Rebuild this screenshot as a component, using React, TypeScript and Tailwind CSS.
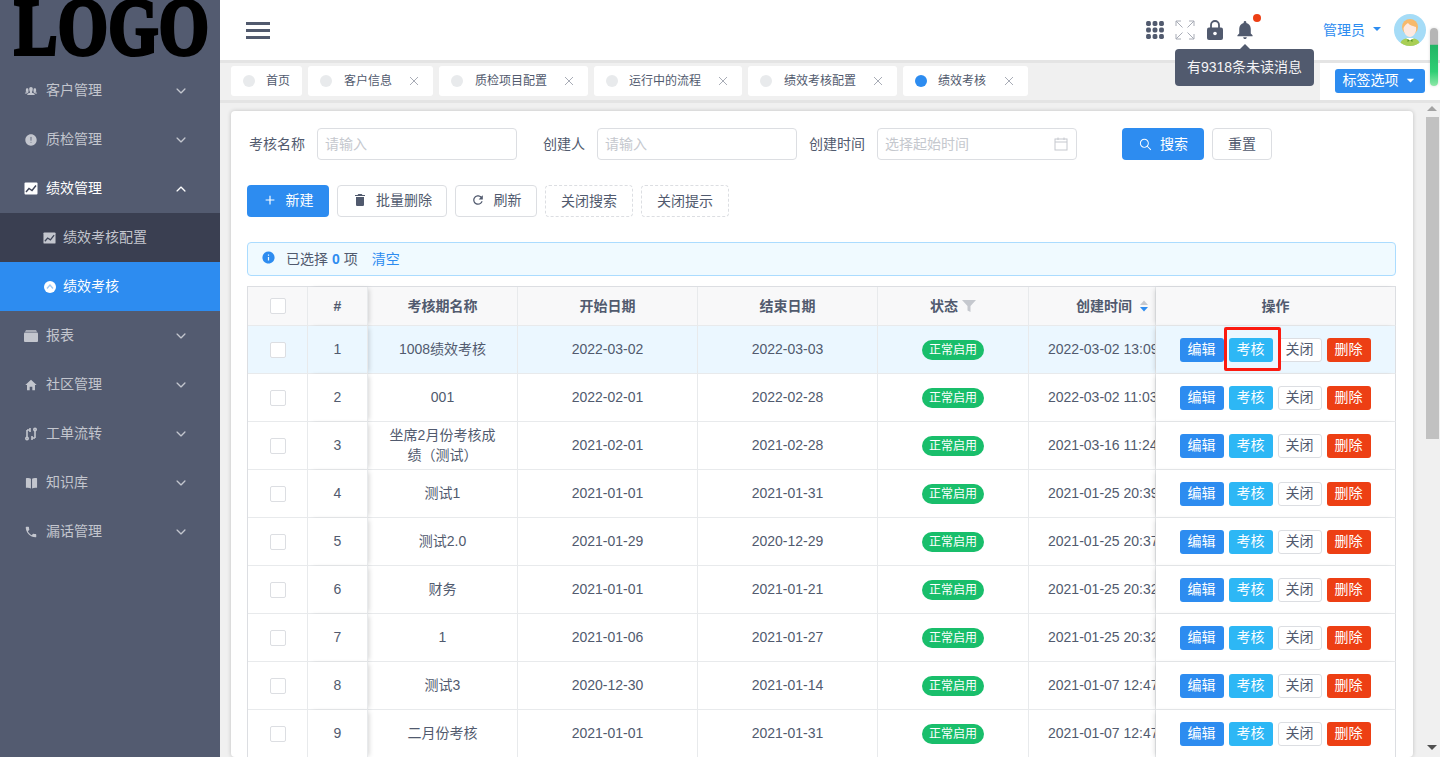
import React from "react";
import {
  IoIosPeople, IoIosAlert, IoMdHome, IoMdCall,
  IoIosArrowDown, IoIosArrowUp, IoIosSearch, IoMdAdd, IoMdTrash, IoMdRefresh,
  IoMdInformationCircle, IoMdNotifications, IoMdArrowDropdown,
} from "react-icons/io";

const Chart = ({ className = "" }: { className?: string }) => (
  <svg viewBox="0 0 14 12" className={className}>
    <rect x="0.5" y="0" width="13" height="12" rx="1" fill="currentColor" />
    <path d="M2 9.5 L5 6 L8 8 L12 3" stroke="#3f4558" strokeWidth="1.4" fill="none" />
  </svg>
);

const Filing = () => (
  <svg viewBox="0 0 14 12" className="h-[12px] w-[14px]" fill="currentColor">
    <path d="M2 0 H12 L13 2 H1 Z" opacity=".75" />
    <rect x="0" y="2.5" width="14" height="9.5" rx="1" />
  </svg>
);

const Flow = () => (
  <svg viewBox="0 0 14 14" className="h-[14px] w-[14px]" fill="none" stroke="currentColor" strokeWidth="1.6">
    <path d="M3 3 H6 V1 M6 5 V3 M3 3 V10 M11 11 H8 V13 M8 9 V11 M11 11 V4" />
    <circle cx="3" cy="11.5" r="1.2" />
    <circle cx="11" cy="2.5" r="1.2" />
  </svg>
);

const Book = () => (
  <svg viewBox="0 0 14 12" className="h-[12px] w-[13px]" fill="currentColor">
    <path d="M1 1 C3 0.4 5 0.6 6.4 1.4 V12 C5 11 3 10.8 1 11.2 Z" />
    <path d="M13 1 C11 0.4 9 0.6 7.6 1.4 V12 C9 11 11 10.8 13 11.2 Z" />
  </svg>
);

const menu = [
  { t: "客户管理", i: <IoIosPeople size={16} /> },
  { t: "质检管理", i: <IoIosAlert size={16} /> },
];
const menu2 = [
  { t: "报表", i: <Filing /> },
  { t: "社区管理", i: <IoMdHome size={14} /> },
  { t: "工单流转", i: <Flow /> },
  { t: "知识库", i: <Book /> },
  { t: "漏话管理", i: <IoMdCall size={14} /> },
];

const MenuItem = ({ t, i, open }: { t: string; i: React.ReactNode; open?: boolean }) => (
  <div className={`flex h-[49px] items-center pl-[24px] pr-[32px] ${open ? "text-white" : "text-[#c3c6ce]"}`}>
    <span className="flex w-[14px] justify-center">{i}</span>
    <span className="ml-[8px] flex-1">{t}</span>
    {open ? <IoIosArrowUp size={14} /> : <IoIosArrowDown size={14} />}
  </div>
);

const tabs = [
  { t: "首页", w: "w-[71px]", m: "ml-[11px]" },
  { t: "客户信息", w: "w-[125px]", m: "ml-[12px]", c: true },
  { t: "质检项目配置", w: "w-[149px]", m: "ml-[12px]", c: true },
  { t: "运行中的流程", w: "w-[148px]", m: "ml-[11px]", c: true },
  { t: "绩效考核配置", w: "w-[149px]", m: "ml-[12px]", c: true },
  { t: "绩效考核", w: "w-[125px]", m: "ml-[11px]", c: true, a: true },
];

const rows = [
  ["1008绩效考核", "2022-03-02", "2022-03-03", "2022-03-02 13:09"],
  ["001", "2022-02-01", "2022-02-28", "2022-03-02 11:03"],
  ["坐席2月份考核成绩（测试）", "2021-02-01", "2021-02-28", "2021-03-16 11:24"],
  ["测试1", "2021-01-01", "2021-01-31", "2021-01-25 20:39"],
  ["测试2.0", "2021-01-29", "2020-12-29", "2021-01-25 20:37"],
  ["财务", "2021-01-01", "2021-01-21", "2021-01-25 20:32"],
  ["1", "2021-01-06", "2021-01-27", "2021-01-25 20:32"],
  ["测试3", "2020-12-30", "2021-01-14", "2021-01-07 12:47"],
  ["二月份考核", "2021-01-01", "2021-01-31", "2021-01-07 12:47"],
];

const Check = () => <span className="mx-auto block h-[16px] w-[16px] rounded-[2px] border border-[#dcdee2] bg-white" />;

const Input = ({ p, children }: { p: string; children?: React.ReactNode }) => (
  <div className="flex h-[32px] w-[200px] items-center justify-between rounded-[4px] border border-[#dcdee2] bg-white pl-[7px] pr-[8px] text-[#c5c8ce]">
    <span>{p}</span>
    {children}
  </div>
);

const OpBtn = ({ c, t }: { c: string; t: string }) => (
  <span className={`flex h-[24px] w-[44px] items-center justify-center rounded-[3px] ${c}`}>{t}</span>
);

const th = "border-r border-b border-[#e8eaec] bg-[#f8f8f9] text-center font-bold";
const td = "border-r border-b border-[#e8eaec] text-center";

export default function App() {
  return (
    <div className="relative flex h-[757px] w-[1440px] overflow-hidden bg-white font-['Liberation_Sans','Noto_Sans_CJK_SC',sans-serif] text-[14px] text-[#515a6e]">
      {/* sidebar */}
      <aside className="flex h-full w-[220px] shrink-0 flex-col bg-[#535b70]">
        <div className="flex h-[66px] items-start overflow-hidden">
          <span className="ml-[-10px] mt-[-18px] origin-center scale-x-[.8] font-['Liberation_Serif',serif] text-[80px] font-bold leading-[90px] tracking-[1px] text-black [-webkit-text-stroke:4px_#000]">
            LOGO
          </span>
        </div>
        {menu.map((m) => <MenuItem key={m.t} {...m} />)}
        <MenuItem t="绩效管理" i={<Chart className="h-[13px] w-[14px]" />} open />
        <div className="flex h-[49px] items-center bg-[#3a3f51] pl-[43px] text-[#c3c6ce]">
          <Chart className="h-[12px] w-[13px]" />
          <span className="ml-[7px]">绩效考核配置</span>
        </div>
        <div className="flex h-[49px] items-center bg-[#2d8cf0] pl-[44px] text-white">
          <svg viewBox="0 0 12 12" className="h-[12px] w-[12px]">
            <circle cx="6" cy="6" r="6" fill="#fff" />
            <path d="M3 7.5 L6 4 L9 7.5" stroke="#9cc7f5" strokeWidth="1.3" fill="none" />
          </svg>
          <span className="ml-[7px]">绩效考核</span>
        </div>
        {menu2.map((m) => <MenuItem key={m.t} {...m} />)}
      </aside>

      {/* main */}
      <div className="flex h-full min-w-0 flex-1 flex-col">
        <header className="flex h-[60px] shrink-0 items-center bg-white pl-[26px] pr-[14px]">
          <div className="flex w-[24px] flex-col gap-[4px]">
            <span className="h-[3px] bg-[#515a6e]" />
            <span className="h-[3px] bg-[#515a6e]" />
            <span className="h-[3px] bg-[#515a6e]" />
          </div>
          <div className="ml-auto flex items-center">
            <svg viewBox="0 0 18 18" className="h-[18px] w-[18px]" fill="#515a6e">
              {[2.5, 9, 15.5].flatMap((y) => [2.5, 9, 15.5].map((x) => <rect key={`${x}-${y}`} x={x - 2.4} y={y - 2.4} width="4.8" height="4.8" rx="1.6" />))}
            </svg>
            <svg viewBox="0 0 20 20" className="ml-[11px] h-[20px] w-[20px]" stroke="#a8acb6" strokeWidth="1" fill="none">
              <path d="M1 1 L7.5 7.5 M1 1 H6 M1 1 V6 M19 1 L12.5 7.5 M19 1 H14 M19 1 V6 M1 19 L7.5 12.5 M1 19 H6 M1 19 V14 M19 19 L12.5 12.5 M19 19 H14 M19 19 V14" />
            </svg>
            <svg viewBox="0 0 16 20" className="ml-[12px] h-[20px] w-[16px]">
              <path d="M4 8 V5 a4 4 0 0 1 8 0 V8" stroke="#515a6e" strokeWidth="1.8" fill="none" />
              <rect x="0" y="7.5" width="16" height="12.5" rx="2" fill="#515a6e" />
              <circle cx="8" cy="13.5" r="1.8" fill="#fff" />
            </svg>
            <span className="relative ml-[11px] flex w-[22px] justify-center">
              <IoMdNotifications size={22} color="#515a6e" />
              <span className="absolute right-[-5px] top-[-5px] h-[8px] w-[8px] rounded-full bg-[#ed3f14]" />
            </span>
            <span className="ml-[67px] text-[#2d8cf0]">管理员</span>
            <IoMdArrowDropdown size={16} color="#2d8cf0" className="ml-[4px] mt-[-2px]" />
            <svg viewBox="0 0 32 32" className="ml-[9px] h-[32px] w-[32px]">
              <clipPath id="av"><circle cx="16" cy="16" r="16" /></clipPath>
              <g clipPath="url(#av)">
                <rect width="32" height="32" fill="#a5dcf7" />
                <path d="M6 32 C6 26 10 24 16 24 C22 24 26 26 26 32 Z" fill="#a9cf55" />
                <circle cx="16" cy="13" r="8" fill="#f7b96b" />
                <path d="M9.5 14 C11 11 12.5 10 14 9 C16 12 20 12 22 13 C23 19 19 23 16 23 C12.5 23 9.5 19 9.5 14 Z" fill="#fde9e1" />
                <path d="M12 24 H20 L16 27 Z" fill="#fff" />
                <path d="M13.5 25 L16 26.5 L18.5 25 V28 L16 26.5 L13.5 28 Z" fill="#5c9a22" />
              </g>
            </svg>
          </div>
        </header>

        <div className="flex h-[43px] shrink-0 border-y-[3px] border-[#e4e4e4] bg-[#f0f0f0]">
          <div className="flex flex-1 items-center gap-[6px] pb-[1px] pl-[11px]">
            {tabs.map((x) => (
              <div key={x.t} className={`flex h-[30px] items-center rounded-[3px] bg-white pl-[12px] text-[12px] ${x.w}`}>
                <span className={`h-[12px] w-[12px] rounded-full ${x.a ? "bg-[#2d8cf0]" : "bg-[#e8eaec]"}`} />
                <span className={`${x.m} flex-1`}>{x.t}</span>
                {x.c && (
                  <svg viewBox="0 0 10 10" className="mr-[14px] h-[10px] w-[10px]" stroke="#a8acb6" strokeWidth="1">
                    <path d="M1 1 L9 9 M9 1 L1 9" />
                  </svg>
                )}
              </div>
            ))}
          </div>
          <div className="flex w-[120px] items-center justify-center bg-white pb-[1px]">
            <span className="flex h-[24px] w-[90px] items-center justify-center gap-[4px] rounded-[3px] bg-[#2d8cf0] pb-[2px] text-white">
              标签选项 <IoMdArrowDropdown size={15} />
            </span>
          </div>
        </div>

        <div className="flex min-h-0 flex-1 bg-[#f0f0f0]">
          <div className="ml-[11px] mt-[8px] min-w-0 w-[1182px] rounded-[4px] bg-white px-[16px] pt-[17px] shadow-[0_0_4px_rgba(0,0,0,.2)]">
            <div className="flex h-[32px] items-center">
              <span className="ml-[2px]">考核名称</span>
              <span className="ml-[12px]"><Input p="请输入" /></span>
              <span className="ml-[26px]">创建人</span>
              <span className="ml-[12px]"><Input p="请输入" /></span>
              <span className="ml-[12px]">创建时间</span>
              <span className="ml-[12px]">
                <Input p="选择起始时间">
                  <svg viewBox="0 0 14 14" className="h-[14px] w-[14px]" stroke="#c5c8ce" fill="none">
                    <rect x="1" y="2" width="12" height="11" />
                    <path d="M1 5 H13 M4 0.5 V3 M10 0.5 V3" />
                  </svg>
                </Input>
              </span>
              <span className="ml-[45px] flex h-[32px] w-[82px] items-center justify-center gap-[7px] rounded-[4px] bg-[#2d8cf0] text-white">
                <IoIosSearch size={15} />搜索
              </span>
              <span className="ml-[8px] flex h-[32px] w-[60px] items-center justify-center rounded-[4px] border border-[#dcdee2]">重置</span>
            </div>

            <div className="mt-[25px] flex h-[32px] items-center gap-[8px]">
              <span className="flex h-full w-[82px] items-center justify-center gap-[9px] rounded-[4px] bg-[#2d8cf0] pb-[2px] text-white">
                <IoMdAdd size={14} />新建
              </span>
              <span className="flex h-full w-[110px] items-center justify-center gap-[8px] rounded-[4px] border border-[#dcdee2] pb-[2px]">
                <IoMdTrash size={16} />批量删除
              </span>
              <span className="flex h-full w-[82px] items-center justify-center gap-[9px] rounded-[4px] border border-[#dcdee2] pb-[2px]">
                <IoMdRefresh size={14} />刷新
              </span>
              <span className="flex h-full w-[88px] items-center justify-center rounded-[4px] border border-dashed border-[#dcdee2]">关闭搜索</span>
              <span className="flex h-full w-[88px] items-center justify-center rounded-[4px] border border-dashed border-[#dcdee2]">关闭提示</span>
            </div>

            <div className="mt-[25px] flex h-[34px] w-[1149px] items-center rounded-[4px] border border-[#abdcff] bg-[#f0faff] pl-[13px]">
              <IoMdInformationCircle size={15} color="#2d8cf0" className="mt-[-4px]" />
              <span className="ml-[10px]">已选择</span>
              <b className="ml-[4px] text-[#2d8cf0]">0</b>
              <span className="ml-[4px]">项</span>
              <span className="ml-[14px] text-[#2d8cf0]">清空</span>
            </div>

            <table className="mt-[10px] w-[1149px] table-fixed border-separate border-spacing-0 border-l border-t border-[#dcdee2] border-r-0">
              <colgroup>
                <col className="w-[60px]" />
                <col className="w-[60px]" />
                <col className="w-[150px]" />
                <col className="w-[180px]" />
                <col className="w-[180px]" />
                <col className="w-[151px]" />
                <col className="w-[127px]" />
                <col />
              </colgroup>
              <thead>
                <tr className="h-[39px]">
                  <th className={th}><Check /></th>
                  <th className={`${th} relative shadow-[3px_0_5px_-2px_rgba(0,0,0,.18)]`}>#</th>
                  <th className={th}>考核期名称</th>
                  <th className={th}>开始日期</th>
                  <th className={th}>结束日期</th>
                  <th className={th}>
                    <span className="inline-flex items-center gap-[4px]">
                      状态
                      <svg viewBox="0 0 14 12" className="h-[12px] w-[14px]" fill="#c5c8ce">
                        <path d="M0 0 H14 L8.5 6 V12 L5.5 10.5 V6 Z" />
                      </svg>
                    </span>
                  </th>
                  <th className={`${th} pl-[47px] text-left`}>
                    <span className="inline-flex items-center gap-[8px]">
                      创建时间
                      <svg viewBox="0 0 8 12" className="h-[12px] w-[8px]">
                        <path d="M4 0.5 L8 5 H0 Z" fill="#c5c8ce" />
                        <path d="M4 11.5 L8 7 H0 Z" fill="#2d8cf0" />
                      </svg>
                    </span>
                  </th>
                  <th className={`${th} relative border-r-[#dcdee2] shadow-[-3px_0_5px_-2px_rgba(0,0,0,.15)]`}>操作</th>
                </tr>
              </thead>
              <tbody>
                {rows.map((r, i) => {
                  const bg = i === 0 ? "bg-[#ebf7ff]" : "bg-white";
                  return (
                    <tr key={i} className="h-[48px]">
                      <td className={`${td} ${bg}`}><Check /></td>
                      <td className={`${td} ${bg} relative shadow-[3px_0_5px_-2px_rgba(0,0,0,.18)]`}>{i + 1}</td>
                      <td className={`${td} ${bg} px-[18px] pb-[2px] leading-[20px] [text-spacing-trim:space-all]`}>{r[0]}</td>
                      <td className={`${td} ${bg}`}>{r[1]}</td>
                      <td className={`${td} ${bg}`}>{r[2]}</td>
                      <td className={`${td} ${bg}`}>
                        <span className="inline-flex h-[20px] w-[62px] items-center justify-center rounded-[10px] bg-[#19be6b] text-[12px] text-white">正常启用</span>
                      </td>
                      <td className={`${td} ${bg} overflow-hidden whitespace-nowrap pl-[19px] text-left`}>{r[3]}</td>
                      <td className={`${td} ${bg} relative border-r-[#dcdee2] shadow-[-3px_0_5px_-2px_rgba(0,0,0,.15)]`}>
                        <div className="flex items-center justify-center gap-[5px] pr-[1px]">
                          <OpBtn c="bg-[#2d8cf0] text-white" t="编辑" />
                          <span className="relative">
                            <OpBtn c="bg-[#2db7f5] text-white" t="考核" />
                            {i === 0 && <span className="absolute left-[-5px] top-[-11px] h-[44px] w-[57px] rounded-[2px] border-[3px] border-[#fb1b10]" />}
                          </span>
                          <OpBtn c="border border-[#dcdee2] bg-white" t="关闭" />
                          <OpBtn c="bg-[#ed3f14] text-white" t="删除" />
                        </div>
                      </td>
                    </tr>
                  );
                })}
              </tbody>
            </table>
          </div>
          <div className="ml-auto flex h-full w-[16px] flex-col items-center">
            <span className="mt-[3px] h-0 w-0 border-x-[5px] border-b-[5px] border-x-transparent border-b-[#a3a3a3]" />
            <span className="mt-[6px] h-[322px] w-[13px] bg-[#c1c1c1]" />
            <span className="mt-auto mb-[7px] h-0 w-0 border-x-[5px] border-t-[5px] border-x-transparent border-t-[#505050]" />
          </div>
        </div>
      </div>

      {/* overlays */}
      <div className="absolute left-[1175px] top-[49px] flex h-[37px] w-[139px] items-center justify-center rounded-[4px] bg-[#515a6e] text-[#f4f4f5]">
        <span className="absolute left-[65px] top-[-5px] h-0 w-0 border-x-[5px] border-b-[5px] border-x-transparent border-b-[#515a6e]" />
        有9318条未读消息
      </div>
      <div className="absolute left-[1430px] top-[28px] h-[58px] w-[8px] rounded-[4px] bg-[linear-gradient(#b5b5b5_0,#b5b5b5_28%,#21b565_30%,#2fce74_75%,#8fe8a8_100%)] shadow-[0_0_3px_rgba(0,0,0,.15)]" />
    </div>
  );
}
